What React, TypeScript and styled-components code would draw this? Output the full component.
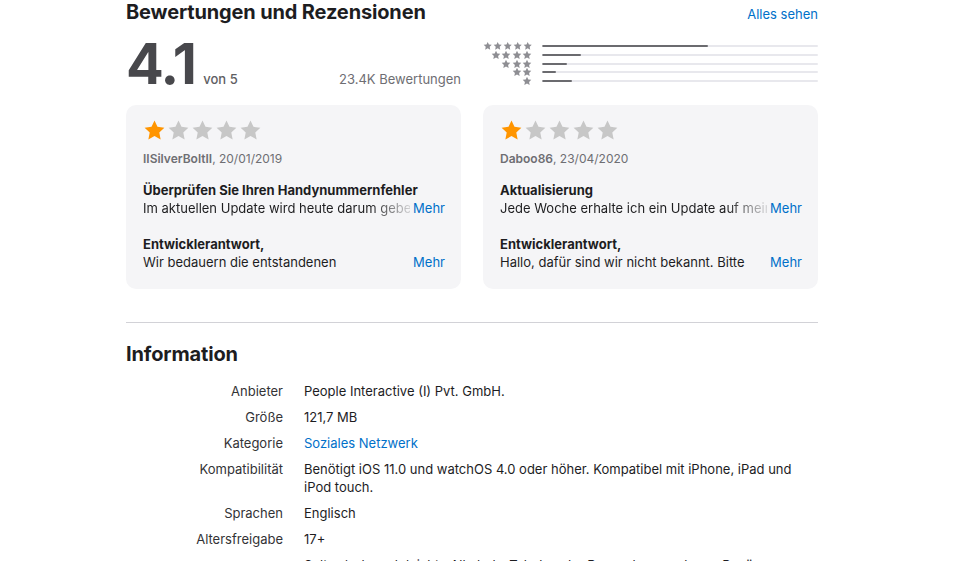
import React from "react";
import styled, { createGlobalStyle } from "styled-components";

const GlobalStyle = createGlobalStyle`
  html, body { margin: 0; padding: 0; background: #fff; }
  body {
    font-family: Inter, "Noto Sans", "Liberation Sans", sans-serif;
    color: #1d1d1f;
    -webkit-font-smoothing: antialiased;
  }
  * { box-sizing: border-box; }
`;

const Page = styled.main`
  width: 692px;
  margin-left: 126px;
  overflow: hidden;
`;

const SectionHeader = styled.header`
  display: flex;
  justify-content: space-between;
  align-items: baseline;
`;

const SectionTitle = styled.h2`
  margin: 0;
  font-size: 20px;
  line-height: 24px;
  font-weight: 700;
  letter-spacing: -0.15px;
  color: #1d1d1f;
`;

const Link = styled.a`
  font-size: 13px;
  color: #0070c9;
  text-decoration: none;
  cursor: pointer;
`;

const TwoCol = styled.div<{ $top: number }>`
  display: grid;
  grid-template-columns: 335px 335px;
  column-gap: 22px;
  margin-top: ${(p) => p.$top}px;
`;

const Summary = styled.div`
  display: flex;
  align-items: baseline;
`;

const BigScore = styled.span`
  font-size: 56px;
  line-height: 58px;
  font-weight: 700;
  letter-spacing: -1.5px;
  color: #48484c;
`;

const OutOf = styled.span`
  margin-left: 8px;
  font-size: 13px;
  color: #5e5e62;
  font-weight: 500;
`;

const Count = styled.span`
  margin-left: auto;
  font-size: 13px;
  color: #6e6e73;
`;

const Histogram = styled.div`
  display: flex;
  flex-direction: column;
  padding-top: 6px;
`;

const HistRow = styled.div`
  display: grid;
  grid-template-columns: 49px 1fr;
  column-gap: 10px;
  align-items: center;
  height: 8.75px;
`;

const HistStars = styled.div`
  display: flex;
  justify-content: flex-end;
  gap: 0.5px;
`;

const Track = styled.div`
  height: 2px;
  background: #e8e8ed;
  border-radius: 1px;
  overflow: hidden;
`;

const Fill = styled.div`
  height: 100%;
  background: #6b6b6f;
  border-radius: 1px;
`;

const Card = styled.article`
  background: #f5f5f7;
  border-radius: 10px;
  padding: 13px 16px 18px 17px;
`;

const CardStars = styled.div`
  display: flex;
  height: 24px;
  align-items: center;
  gap: 1px;
`;

const Byline = styled.div`
  margin-top: 9px;
  font-size: 12px;
  line-height: 16px;
  color: #6e6e73;
`;

const Author = styled.span`
  font-weight: 600;
`;

const ReviewTitle = styled.h3<{ $top: number }>`
  margin: ${(p) => p.$top}px 0 0;
  font-size: 13px;
  line-height: 18px;
  font-weight: 700;
  color: #1d1d1f;
`;

const BodyLine = styled.div`
  display: flex;
  align-items: baseline;
  font-size: 13px;
  line-height: 18px;
  color: #1d1d1f;
`;

const BodyText = styled.span<{ $fade?: boolean }>`
  flex: 1;
  min-width: 0;
  white-space: nowrap;
  overflow: hidden;
  ${(p) =>
    p.$fade
      ? `-webkit-mask-image: linear-gradient(to right, #000 calc(100% - 40px), rgba(0,0,0,0.15));
         mask-image: linear-gradient(to right, #000 calc(100% - 40px), rgba(0,0,0,0.15));`
      : ""}
`;

const More = styled.a`
  margin-left: 3px;
  color: #0070c9;
  text-decoration: none;
  cursor: pointer;
`;

const Divider = styled.hr`
  margin: 33px 0 0;
  border: 0;
  border-top: 1px solid #d2d2d7;
`;

const InfoSection = styled.section`
  margin-top: 19px;
`;

const InfoList = styled.dl`
  display: grid;
  grid-template-columns: 157px 1fr;
  column-gap: 21px;
  row-gap: 8px;
  margin: 16px 0 0;
  font-size: 13px;
  line-height: 18px;
`;

const Term = styled.dt`
  text-align: right;
  color: #333336;
`;

const Desc = styled.dd<{ $link?: boolean }>`
  margin: 0;
  color: ${(p) => (p.$link ? "#0070c9" : "#1d1d1f")};
`;

const STAR =
  "M12 1.6l3.1 6.6 7.2.9-5.3 5 1.4 7.2L12 17.8l-6.4 3.5 1.4-7.2-5.3-5 7.2-.9z";

const Star = ({ size, color }: { size: number; color: string }) => (
  <svg width={size} height={size} viewBox="0 0 24 24" aria-hidden="true">
    <path d={STAR} fill={color} />
  </svg>
);

const hist = [
  { n: 5, pct: 60 },
  { n: 4, pct: 14 },
  { n: 3, pct: 9 },
  { n: 2, pct: 5 },
  { n: 1, pct: 11 },
];

type Review = {
  author: string;
  date: string;
  title: string;
  body: string;
  reply: string;
  fadeBody: boolean;
};

const reviews: Review[] = [
  {
    author: "IISilverBoltII",
    date: "20/01/2019",
    title: "Überprüfen Sie Ihren Handynummernfehler",
    body: "Im aktuellen Update wird heute darum gebeten, die Handynummer zu bestätigen",
    reply: "Wir bedauern die entstandenen",
    fadeBody: true,
  },
  {
    author: "Daboo86",
    date: "23/04/2020",
    title: "Aktualisierung",
    body: "Jede Woche erhalte ich ein Update auf meinem Handy",
    reply: "Hallo, dafür sind wir nicht bekannt. Bitte",
    fadeBody: true,
  },
];

const info: { k: string; v: string; link?: boolean }[] = [
  { k: "Anbieter", v: "People Interactive (I) Pvt. GmbH." },
  { k: "Größe", v: "121,7 MB" },
  { k: "Kategorie", v: "Soziales Netzwerk", link: true },
  {
    k: "Kompatibilität",
    v: "Benötigt iOS 11.0 und watchOS 4.0 oder höher. Kompatibel mit iPhone, iPad und iPod touch.",
  },
  { k: "Sprachen", v: "Englisch" },
  { k: "Altersfreigabe", v: "17+" },
  { k: "", v: "Selten/schwach leichte Alkohol-, Tabak- oder Drogenkonsum bzw. -Bezüge" },
];

export default function App() {
  return (
    <>
      <GlobalStyle />
      <Page>
        <section>
          <SectionHeader>
            <SectionTitle>Bewertungen und Rezensionen</SectionTitle>
            <Link>Alles sehen</Link>
          </SectionHeader>
          <TwoCol $top={11}>
            <Summary>
              <BigScore>4.1</BigScore>
              <OutOf>von 5</OutOf>
              <Count>23.4K Bewertungen</Count>
            </Summary>
            <Histogram>
              {hist.map((h) => (
                <HistRow key={h.n}>
                  <HistStars>
                    {Array.from({ length: h.n }).map((_, i) => (
                      <Star key={i} size={10} color="#8e8e93" />
                    ))}
                  </HistStars>
                  <Track>
                    <Fill style={{ width: `${h.pct}%` }} />
                  </Track>
                </HistRow>
              ))}
            </Histogram>
          </TwoCol>
          <TwoCol $top={12}>
            {reviews.map((r) => (
              <Card key={r.author}>
                <CardStars>
                  {[0, 1, 2, 3, 4].map((i) => (
                    <Star key={i} size={23} color={i === 0 ? "#ff9500" : "#c7c7c7"} />
                  ))}
                </CardStars>
                <Byline>
                  <Author>{r.author}</Author>, {r.date}
                </Byline>
                <ReviewTitle $top={14}>{r.title}</ReviewTitle>
                <BodyLine>
                  <BodyText $fade={r.fadeBody}>{r.body}</BodyText>
                  <More>Mehr</More>
                </BodyLine>
                <ReviewTitle $top={18}>Entwicklerantwort,</ReviewTitle>
                <BodyLine>
                  <BodyText>{r.reply}</BodyText>
                  <More>Mehr</More>
                </BodyLine>
              </Card>
            ))}
          </TwoCol>
        </section>
        <Divider />
        <InfoSection>
          <SectionTitle>Information</SectionTitle>
          <InfoList>
            {info.map((row, i) => (
              <React.Fragment key={i}>
                <Term>{row.k}</Term>
                <Desc $link={row.link}>{row.v}</Desc>
              </React.Fragment>
            ))}
          </InfoList>
        </InfoSection>
      </Page>
    </>
  );
}
